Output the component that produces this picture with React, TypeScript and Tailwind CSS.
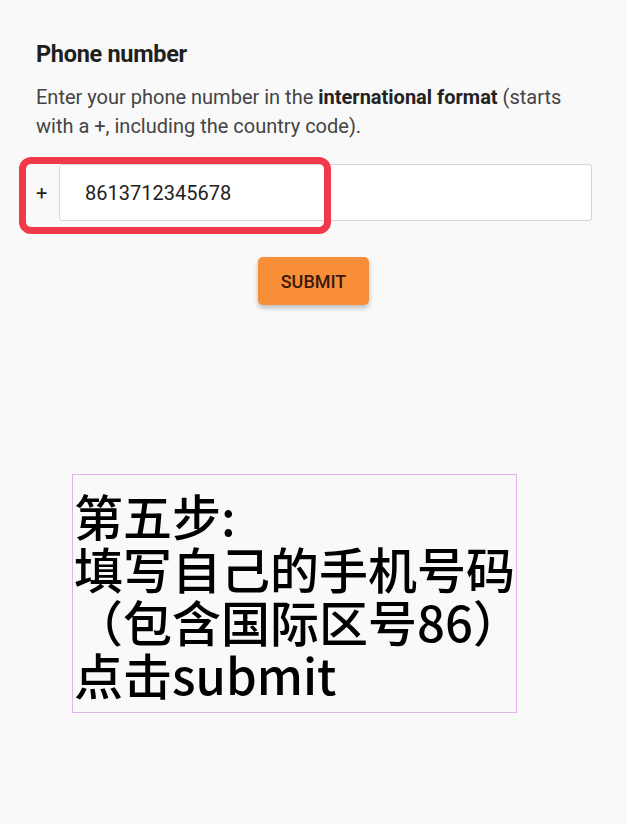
import React from 'react';

const App: React.FC = () => {
    return (
        <div className="min-h-screen w-full bg-[#f9f9f9] font-['Roboto',sans-serif]">
            <div className="px-[36px] pt-[39px]">
                <h1 className="text-[23.5px] leading-[30px] font-bold text-[#1f1f1f] tracking-[-0.3px]">Phone number</h1>
                <p className="mt-[14px] text-[20px] leading-[29px] text-[#444444]">
                    Enter your phone number in the <span className="font-bold text-[#222222]">international format</span> (starts
                    with a +, including the country code).
                </p>
            </div>

            {/* Phone input with annotation frame */}
            <div className="relative mt-[23px] flex items-center pl-[36px] pr-[35px]">
                <span className="w-[23px] text-[20px] text-[#222222]">+</span>
                <div className="flex h-[57px] flex-1 items-center rounded-[3px] border border-[#d6d6d6] bg-white pl-[25px] text-[20px] text-[#222222]">
                    8613712345678
                </div>
                <div className="pointer-events-none absolute left-[19px] top-[-7px] h-[77px] w-[312px] rounded-[12px] border-[7px] border-[#f2394a]"></div>
            </div>

            <div className="mt-[36px] flex justify-center">
                <button className="h-[48px] w-[111px] rounded-[5px] bg-[#f88f38] text-[18px] font-medium text-[#3a1a0a] shadow-[0_3px_5px_rgba(0,0,0,0.25)]">
                    SUBMIT
                </button>
            </div>

            {/* Caption */}
            <div className="ml-[72px] mt-[169px] h-[239px] w-[445px] border border-[#e2b2ea] pl-[1px] pt-[13px] font-['Noto_Sans_CJK_SC',sans-serif] text-[49px] font-medium leading-[53px] text-black">
                <div>第五步:</div>
                <div>填写自己的手机号码</div>
                <div>（包含国际区号86）</div>
                <div>点击submit</div>
            </div>
        </div>
    );
};

export default App;
